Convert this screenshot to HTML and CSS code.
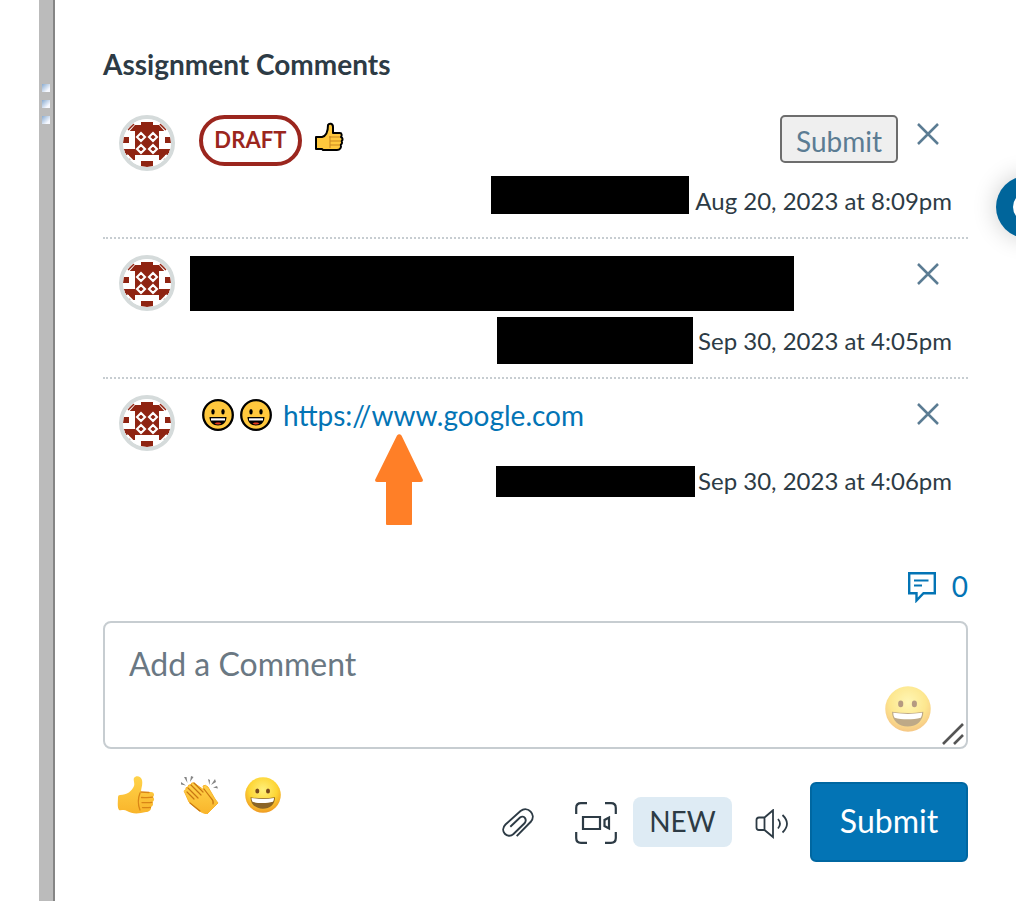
FILE: index.html
```html
<!DOCTYPE html>
<html lang="en">
<head>
<meta charset="utf-8">
<title>Assignment Comments</title>
<link rel="stylesheet" href="styles.css">
</head>
<body>
<svg class="defs" width="0" height="0" aria-hidden="true">
  <defs>
    <radialGradient id="skin" cx=".5" cy=".35" r=".65"><stop offset="0" stop-color="#fff07a"/><stop offset=".6" stop-color="#fdd535"/><stop offset="1" stop-color="#ef9a22"/></radialGradient>
    <linearGradient id="hand" x1="0" y1="0" x2="0" y2="1"><stop offset="0" stop-color="#ffd34a"/><stop offset="1" stop-color="#f9b52b"/></linearGradient>
    <clipPath id="round"><circle cx="24" cy="24" r="24"/></clipPath>
    <symbol id="avatar" viewBox="0 0 48 48">
      <g clip-path="url(#round)">
        <path fill="#fff" d="M0 0h48v48H0z"/>
        <path fill="#8f2412" d="M12 6h6V3h12v3h6v6h6v0h-6v24H12V12zM6 6h6v6H6zM36 6h6v6h-6zM0 18h6v6H0zM42 18h6v6h-6zM18 42h12v6H18zM0 30h12v6H0zM36 30h12v6H36zM6 36h6v5H6zM36 36h6v5h-6z"/>
        <path fill="#fff" d="M12 6l-7 8-3-3 8-8zM36 6l7 8 3-3-8-8z"/>
        <path fill="none" stroke="#fff" stroke-width="2.100" d="M18 14l4 4-4 4-4-4zM30 14l4 4-4 4-4-4zM18 26l4 4-4 4-4-4zM30 26l4 4-4 4-4-4z"/>
        <path fill="none" stroke="#8f2412" stroke-width="1.500" d="M5 11l6-6M43 11l-6-6"/>
        <path fill="none" stroke="#fff" stroke-width="1.800" d="M4 36l8 8M44 36l-8 8"/>
      </g>
    </symbol>
    <symbol id="close" viewBox="0 0 24 24"><path fill="none" stroke="#5b7c93" stroke-width="2.500" d="M2 2l20 20M22 2L2 22"/></symbol>
    <symbol id="flat-face" viewBox="0 0 32 32">
      <circle cx="16" cy="16" r="14.800" fill="#ffc83d" stroke="#000" stroke-width="2.300"/>
      <ellipse cx="11" cy="12.800" rx="1.700" ry="2.700"/><ellipse cx="21" cy="12.800" rx="1.700" ry="2.700"/>
      <path d="M7.500 18h17c0 5-3.500 8.500-8.500 8.500S7.500 23 7.500 18z"/>
      <path fill="#fff" d="M9 19.300h14v2.200H9z"/><path fill="#e63a1e" d="M12.500 24.500c1-1.500 6-1.500 7 0-2 1.200-5 1.200-7 0z"/>
    </symbol>
    <symbol id="face" viewBox="0 0 36 36">
      <circle cx="18" cy="18" r="17.800" fill="url(#skin)"/>
      <ellipse cx="12.300" cy="14" rx="2" ry="2.600" fill="#79491c"/><ellipse cx="23" cy="14" rx="2" ry="2.600" fill="#79491c"/>
      <path fill="#8a6426" d="M5.500 20.200c8 1.300 17 1.300 24.500 0 0 7-5 11.500-12.200 11.500S5.500 27.200 5.500 20.200z"/>
      <path fill="#fff" d="M6.500 21c8 1.200 15 1.200 22.500 0 0 1.500-.3 2.800-1 3.800-6 1.700-15 1.700-20.500 0-.7-1-1-2.300-1-3.800z"/>
    </symbol>
  </defs>
</svg>
<div class="app">
  <div class="splitter"><i></i><i></i><i></i></div>
  <main class="panel">
    <h2 class="title">Assignment Comments</h2>

    <article class="comment">
      <svg class="avatar"><use href="#avatar"/></svg>
      <div class="body">
        <div class="line">
          <span class="draft">DRAFT</span>
          <svg class="flat-thumb" viewBox="0 0 30 30"><path fill="#ffc83d" stroke="#000" stroke-width="2" stroke-linejoin="round" d="M2 15h6c4-1 6-5 6-12 1-2 5-2 5 2v6h7c2 0 2 3 1 4 2 1 2 3 .5 4 1 1.500.5 3-.7 3.700.8 3-.8 5.300-3.800 5.300H9l-1-1H2z"/><path fill="none" stroke="#c98520" stroke-width="1" d="M15 15h11M16 19h10M16 23h10M16 14v12"/></svg>
          <button class="submit-draft">Submit</button>
        </div>
        <div class="meta"><span class="mask mask-a"></span><time>Aug 20, 2023 at 8:09pm</time></div>
      </div>
      <svg class="close"><use href="#close"/></svg>
    </article>

    <article class="comment">
      <svg class="avatar"><use href="#avatar"/></svg>
      <div class="body">
        <div class="line"><span class="mask mask-text"></span></div>
        <div class="meta"><span class="mask mask-b"></span><time>Sep 30, 2023 at 4:05pm</time></div>
      </div>
      <svg class="close"><use href="#close"/></svg>
    </article>

    <article class="comment last">
      <svg class="avatar"><use href="#avatar"/></svg>
      <div class="body">
        <div class="line link-line">
          <svg class="flat-face"><use href="#flat-face"/></svg>
          <svg class="flat-face"><use href="#flat-face"/></svg>
          <a class="link">https://www.google.com</a>
        </div>
        <div class="meta"><span class="mask mask-c"></span><time>Sep 30, 2023 at 4:06pm</time></div>
      </div>
      <svg class="close"><use href="#close"/></svg>
      <svg class="arrow" viewBox="0 0 48 92"><path fill="#ff7f27" d="M22 1.500q2.300-2.500 4.500 0L48 46q0 2-2 2h-9v42q0 1-1 1H12q-1 0-1-1V48H2q-2 0-2-2z"/></svg>
    </article>

    <div class="library">
      <svg width="30" height="32" viewBox="0 0 30 32" fill="none" stroke="#0374b5" stroke-width="2.400"><path d="M2.200 2.200h25.600v20H16.500L9.500 29.500v-7.300H2.200z"/><path stroke-width="2" d="M7 9.500h14.500M7 14.500h8"/></svg>
      <span>0</span>
    </div>

    <div class="editor">
      <span>Add a Comment</span>
      <svg class="picker"><use href="#face"/></svg>
      <svg class="resize" viewBox="0 0 24 24"><path fill="none" stroke="#555" stroke-width="2.600" d="M2 22L22 2M13 22l9-9"/></svg>
    </div>

    <div class="footer">
      <div class="reactions">
        <svg viewBox="0 0 36 38"><path fill="url(#hand)" d="M0 21q0-2 2-2c7 0 12-4 14-9 1-3-1-6 0-8 2-3 7-2 8 2 1 5-1 8-1 12h10c3 0 4 3 2 5 2 2 1 4-.5 5 1 2 .5 4-1.500 5 .5 3-2 5-5 5-8 2-14 2-19-1-3-2-6 0-8-1-2-3-1-9-1-13z"/><path fill="none" stroke="#d98516" stroke-width="1.300" stroke-linecap="round" d="M34.500 21.200c-3 .7-8 .3-11 .3M34 26.300c-3 .7-7 .3-10 .3M32.500 31.300c-3 .7-5 .3-8 .3M22 17c-2 5-2 12 0 17M23 16l8 .5"/></svg>
        <svg viewBox="0 0 38 38"><path fill="url(#hand)" stroke="#f9b52b" stroke-linejoin="round" d="M4 17l4 9 9 8q4 3 9 4l11-11-3-4-7-12q-3-3-5-1l1 4-10-7q-3-1-3 2-3-1-3 2-3 0-2 3-3 0-1 3z"/><path fill="none" stroke="#c97712" stroke-width="1.200" stroke-linecap="round" d="M6 16l7 7M7 12l10 10M10 9l10 10M13 7l9 9M23 13l7 9q3 3 2 6M9 27l10 8"/><path fill="#858585" d="M0 6l0 2.500 5 1zM3 1l2.500 0 1 6zM10 0l2.500 1-3.500 5zM27 3l2 1-.5 5zM34 3l1 3-5 3zM36 10l1 2.500-5-1z"/></svg>
        <svg><use href="#face"/></svg>
      </div>
      <div class="tools">
        <svg class="clip" viewBox="0 0 34 32" fill="none" stroke="#2d3b45" stroke-width="1.900"><path d="M15.700 29.200L30 14.500C35.500 7.500 27-1.500 19.500 4L4.500 17.500C-2 24 6.500 32.500 12.500 27L23.500 16.300C26.500 12.500 23 7.500 19 10.500L9.300 19.800"/></svg>
        <svg class="record" viewBox="0 0 42 42" fill="none" stroke="#2d3b45" stroke-width="2.200"><path d="M1.200 12V6q0-4.800 4.800-4.800h6M30 1.200h6q4.800 0 4.800 4.800v6M1.200 30v6q0 4.800 4.800 4.800h6M30 40.800h6q4.800 0 4.800-4.800v-6M8 15h17v12H8zM34 15.500v11l-4.500-2.500v-6z"/></svg>
        <span class="new">NEW</span>
        <svg class="speaker" viewBox="0 0 34 30" fill="none" stroke="#2d3b45" stroke-width="1.800"><path d="M9.500 8.500H4q-2.500 0-2.500 2.500v7.500Q1.500 21 4 21h5.500l8.500 7V1.200zM9.500 8.500V21M23 10q4 4.700 0 9.500M27.500 6q9 8.800 0 17.500"/></svg>
        <button class="submit">Submit</button>
      </div>
    </div>
  </main>
  <div class="help"><span></span></div>
</div>
</body>
</html>
```
FILE: styles.css
```css
* { box-sizing: border-box; }
body { margin: 0; background: #fff; color: #2d3b45; font-family: Lato, "Liberation Sans", sans-serif; }
button { font-family: inherit; }
svg { display: block; flex: none; }
.defs { position: absolute; }
.app { position: relative; display: flex; width: 1016px; height: 901px; padding-left: 39px; overflow: hidden; }
.splitter { flex: none; width: 16px; background: #bbb; border-right: 2px solid #858585; padding: 84px 0 0 3px; }
.splitter i { display: block; width: 8px; height: 8px; margin-bottom: 8px; background: linear-gradient(135deg, #89abd0, #f5f8ff 75%); }
.panel { width: 865px; margin-left: 48px; padding-top: 48px; }
.title { margin: 0; height: 51px; font-size: 28px; line-height: 33px; font-weight: 700; }
.comment { position: relative; display: flex; height: 140px; padding: 16px; border-bottom: 2px dotted #c7cdd1; }
.last { border: 0; }
.avatar { width: 56px; height: 56px; border: 4px solid #d5dbdb; border-radius: 50%; }
.body { flex: 1; margin-left: 15px; margin-right: -36px; }
.line { display: flex; height: 61px; padding-left: 9px; }
.draft { width: 103px; height: 51px; border: 4px solid #9b261e; border-radius: 26px; color: #9b261e; font-size: 22px; line-height: 42px; font-weight: 700; letter-spacing: .1px; text-align: center; }
.flat-thumb { width: 30px; height: 30px; margin: 7px 0 0 12px; }
.submit-draft { width: 118px; height: 48px; margin: 0 54px 0 auto; padding: 4px 0 0; border: 2px solid #6d6d6d; border-radius: 5px; background: #efefef; color: #5b7c93; font-size: 28px; line-height: 38px; }
.meta { display: flex; height: 50px; justify-content: flex-end; font-size: 24px; line-height: 50px; }
.mask { background: #000; }
.mask-a { width: 198px; height: 38px; margin-right: 6px; }
.mask-text { width: 604px; height: 55px; margin-left: -9px; margin-top: 1px; }
.mask-b { width: 196px; height: 47px; margin: 1px 5px 0 0; }
.mask-c { width: 199px; height: 31px; margin: 10px 3px 0 0; }
.close { width: 24px; height: 24px; margin-top: 7px; margin-right: 12px; }
.link-line { padding: 4px 0 0 12px; gap: 6px; }
.flat-face { width: 32px; height: 32px; }
.link { margin-left: 5px; color: #0374b5; font-size: 28px; line-height: 32px; }
.arrow { position: absolute; left: 272px; top: 55px; width: 48px; height: 92px; }
.library { display: flex; height: 102px; justify-content: flex-end; align-items: flex-start; gap: 15px; padding-top: 52px; color: #0374b5; font-size: 28px; line-height: 30px; }
.editor { position: relative; height: 128px; padding: 20px 24px; border: 2px solid #c7cdd1; border-radius: 8px; color: #6a7883; font-size: 32px; line-height: 42px; }
.picker { position: absolute; left: 780px; top: 63px; width: 46px; height: 46px; opacity: .55; }
.resize { position: absolute; right: 1px; bottom: 1px; width: 24px; height: 24px; }
.footer { display: flex; justify-content: space-between; padding: 27px 0 0 14px; }
.reactions { display: flex; gap: 26px; }
.reactions svg { width: 38px; height: 38px; }
.reactions svg:last-child { width: 36px; height: 36px; margin-top: 1px; }
.tools { display: flex; align-items: center; margin-top: 6px; height: 80px; }
.clip { width: 34px; height: 32px; margin-right: 40px; margin-top: 2px; }
.record { width: 42px; height: 42px; margin-right: 16px; margin-top: 2px; }
.new { width: 99px; height: 50px; margin-right: 23px; border-radius: 8px; background: #deebf4; font-size: 28px; line-height: 48px; text-align: center; }
.speaker { width: 34px; height: 30px; margin-right: 21px; margin-top: 4px; }
.submit { width: 158px; height: 80px; padding: 0 0 3px; border: 2px solid #0067a1; border-radius: 6px; background: #0374b5; color: #fff; font-size: 32px; line-height: 73px; }
.help { position: absolute; left: 996px; top: 176px; width: 62px; height: 62px; border-radius: 50%; padding: 16px 17px; background: #00659b; box-shadow: 0 0 24px #0003; }
.help span { display: block; width: 30px; height: 30px; border: 5px solid #fff; border-radius: 50%; }
```
